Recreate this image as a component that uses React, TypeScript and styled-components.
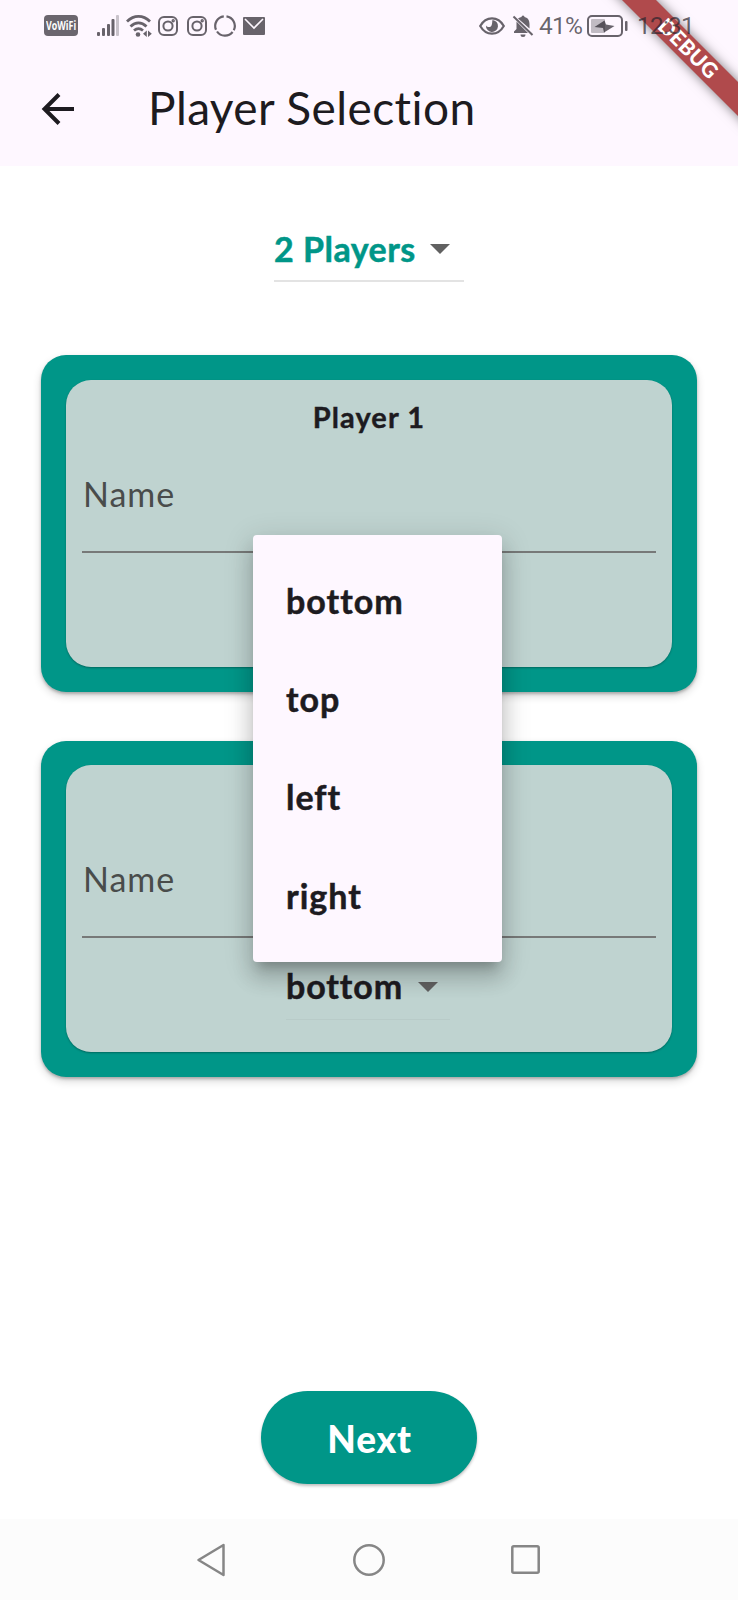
import React from "react";
import styled, { createGlobalStyle } from "styled-components";

const teal = "#009688";
const ink = "#1d1b20";
const surface = "#fef7ff";
const statusInk = "rgba(40, 36, 44, 0.7)";

const GlobalStyle = createGlobalStyle`
  * { box-sizing: border-box; }
  body { margin: 0; background: #fff; }
`;

const Screen = styled.div`
  position: relative;
  display: flex;
  flex-direction: column;
  width: 738px;
  height: 1600px;
  overflow: hidden;
  background: #fff;
  color: ${ink};
  font-family: Lato, "Open Sans", sans-serif;
  font-variant-ligatures: none;
`;

const StatusBar = styled.div`
  position: relative;
  z-index: 3;
  display: flex;
  align-items: center;
  justify-content: space-between;
  height: 51px;
  padding: 0 47px 0 44px;
  color: ${statusInk};
`;

const StatusGroup = styled.div`
  display: flex;
  align-items: center;
  height: 51px;
`;

const StatusText = styled.span<{ $gap: number; $width: number }>`
  width: ${(p) => p.$width}px;
  margin-left: ${(p) => p.$gap}px;
  font: 400 24.5px/53px Roboto, sans-serif;
  letter-spacing: -0.8px;
  white-space: nowrap;
`;

const Glyph = styled.svg<{ $gap?: number }>`
  display: block;
  flex: none;
  margin-left: ${(p) => p.$gap ?? 0}px;
  overflow: visible;
`;

const VoWifi = styled.span`
  display: flex;
  align-items: center;
  justify-content: center;
  width: 34px;
  height: 21px;
  border-radius: 4px;
  background: #6b666e;
  color: #fff;
  font: 700 13px/21px "Open Sans", sans-serif;
`;

const Condensed = styled.span`
  transform: scaleX(0.68);
`;

const Header = styled.header`
  background: ${surface};
  height: 166px;
`;

const Toolbar = styled.div`
  display: flex;
  align-items: center;
  height: 115px;
  padding-left: 41px;
`;

const Title = styled.h1`
  margin: 0 0 1px 73px;
  font-size: 46px;
  font-weight: 400;
  line-height: 60px;
  letter-spacing: 0.4px;
  white-space: nowrap;
`;

const BannerClip = styled.div`
  position: absolute;
  top: 0;
  right: 0;
  z-index: 2;
  width: 160px;
  height: 160px;
  overflow: hidden;
`;

const Ribbon = styled.div`
  position: absolute;
  top: 37px;
  left: 10px;
  width: 200px;
  height: 24px;
  transform: rotate(45deg);
  background: #b04a4c;
  box-shadow: 0 0 12px rgba(0, 0, 0, 0.5);
  color: #fff;
  font: 900 21px/22px Lato, sans-serif;
  letter-spacing: 0.4px;
  text-align: center;
`;

const Body = styled.main`
  flex: 1;
  display: flex;
  flex-direction: column;
  align-items: center;
`;

const CountSelect = styled.div`
  display: flex;
  align-items: center;
  width: 190px;
  height: 68px;
  margin-top: 48px;
  padding-top: 3px;
  border-bottom: 2px solid #e3e3e3;
  color: ${teal};
  font-size: 34px;
  font-weight: 700;
  letter-spacing: 0.5px;
  -webkit-text-stroke: 0.5px;
  white-space: nowrap;
`;

const CountLabel = styled.span`
  width: 156px;
  line-height: 64px;
`;

const Cards = styled.div`
  display: flex;
  flex-direction: column;
  gap: 49px;
  width: 656px;
  margin-top: 73px;
`;

const Card = styled.section`
  height: 336.5px;
  padding: 24.5px 25px 25px;
  border-radius: 25px;
  background: ${teal};
  box-shadow: 0 2px 3px rgba(0, 0, 0, 0.24), 0 4px 8px rgba(0, 0, 0, 0.16);
`;

const CardInner = styled.div`
  display: flex;
  flex-direction: column;
  align-items: center;
  height: 287px;
  padding: 0 16px;
  border-radius: 25px;
  background: #bfd3d0;
  box-shadow: 0 1px 2px rgba(0, 0, 0, 0.3);
`;

const CardTitle = styled.h2`
  height: 72px;
  margin: 0;
  font-size: 29px;
  font-weight: 700;
  line-height: 73px;
  letter-spacing: 1.1px;
  -webkit-text-stroke: 0.4px;
`;

const Field = styled.div`
  align-self: stretch;
  height: 101px;
  padding-left: 1px;
  border-bottom: 2px solid #777978;
  color: #494c4b;
  font-size: 34px;
  line-height: 83px;
  letter-spacing: 1px;
`;

const SideSelect = styled.div`
  display: flex;
  width: 164px;
  height: 82px;
  margin-right: 2px;
  padding-top: 24px;
  border-bottom: 1px solid #b8cbc8;
  font-size: 34px;
  font-weight: 700;
  line-height: 47px;
  letter-spacing: 0.9px;
  -webkit-text-stroke: 0.5px;
`;

const SideLabel = styled.span`
  width: 132px;
`;

const Menu = styled.ul`
  position: absolute;
  top: 535px;
  left: 253px;
  z-index: 1;
  width: 249px;
  height: 427px;
  margin: 0;
  padding: 16.5px 0 0 33px;
  border-radius: 4px;
  background: ${surface};
  box-shadow: 0 10px 10px -6px rgba(0, 0, 0, 0.2), 0 16px 20px 2px rgba(0, 0, 0, 0.14),
    0 6px 28px 4px rgba(0, 0, 0, 0.12);
  list-style: none;
`;

const MenuItem = styled.li`
  height: 98.4px;
  font-size: 34px;
  font-weight: 700;
  line-height: 98.4px;
  letter-spacing: 1px;
  -webkit-text-stroke: 0.5px;
`;

const NextButton = styled.button`
  width: 216px;
  height: 93px;
  margin: auto 0 35px;
  padding: 0 0 0 1px;
  border: 0;
  border-radius: 47px;
  background: ${teal};
  box-shadow: 0 2px 3px rgba(0, 0, 0, 0.25);
  color: #fff;
  font: 900 37px/95px Lato, sans-serif;
  letter-spacing: 0.8px;
`;

const NavBar = styled.nav`
  display: flex;
  height: 81px;
  align-items: center;
  padding-left: 196px;
  background: #fcfcfc;
  color: #868686;
`;

const Caret = () => (
  <Glyph width="20" height="10" viewBox="0 0 20 10">
    <path d="M0 0h20L10 10z" fill="#616161" />
  </Glyph>
);

const CaretSlot = styled.span`
  padding-top: 20px;
`;

const Instagram = ({ gap }: { gap: number }) => (
  <Glyph $gap={gap} width="20" height="20" viewBox="0 0 20 20" fill="none" stroke="currentColor" strokeWidth="2">
    <rect x="1" y="1" width="18" height="18" rx="5" />
    <circle cx="10" cy="10" r="4.6" />
    <circle cx="15.2" cy="4.8" r="0.7" />
  </Glyph>
);

const PlayerCard = ({ title, side }: { title?: string; side?: string }) => (
  <Card>
    <CardInner>
      <CardTitle>{title}</CardTitle>
      <Field>Name</Field>
      {side && (
        <SideSelect>
          <SideLabel>{side}</SideLabel>
          <CaretSlot>
            <Caret />
          </CaretSlot>
        </SideSelect>
      )}
    </CardInner>
  </Card>
);

export default function App() {
  return (
    <Screen>
      <GlobalStyle />
      <Header>
        <StatusBar>
          <StatusGroup>
            <VoWifi>
              <Condensed>VoWiFi</Condensed>
            </VoWifi>
            <Glyph $gap={19} width="22" height="22" viewBox="0 0 22 22" fill="currentColor">
              <rect x="0" y="17" width="3" height="4" rx="1" />
              <rect x="5" y="13" width="3" height="8" rx="1" />
              <rect x="10" y="9" width="3" height="12" rx="1" />
              <rect x="14.5" y="4" width="3" height="17" rx="1" />
              <rect x="19" y="0" width="3" height="21" rx="1" opacity="0.35" />
            </Glyph>
            <Glyph $gap={7} width="26" height="22" viewBox="0 0 26 22" fill="none" stroke="currentColor" strokeWidth="2.8">
              <path d="M1 6.5C8-.3 17-.3 24 6.5M4.500 11.500c5-4.800 11-4.800 16 0M8 15.500c3-2.500 6-2.500 9 0" />
              <circle cx="12" cy="19.500" r="2.300" fill="currentColor" stroke="none" />
              <path d="M20.800 15.500v6.500l-3.800-3.200zM22 15.500v6.500l3.800-3.200z" fill="currentColor" stroke="none" />
            </Glyph>
            <Instagram gap={6} />
            <Instagram gap={9} />
            <Glyph $gap={7} width="22" height="22" viewBox="0 0 22 22" fill="none" stroke="currentColor" strokeWidth="2.2">
              <path d="M12.500 1.300A9.700 9.700 0 0 1 19.800 15.200M18.600 17A9.700 9.700 0 0 1 3 16.500M2 14.800A9.700 9.700 0 0 1 9.800 1.300" />
            </Glyph>
            <Glyph $gap={7} width="22" height="18" viewBox="0 0 22 18">
              <rect width="22" height="18" rx="1" fill="currentColor" />
              <path d="M2 2l9 9 9-9" fill="none" stroke="#fef7ff" strokeWidth="1.600" />
            </Glyph>
          </StatusGroup>
          <StatusGroup>
            <Glyph width="26" height="18" viewBox="0 0 26 18">
              <path d="M1.200 9C7-1.200 19-1.200 24.800 9 19 19.200 7 19.200 1.200 9z" fill="none" stroke="currentColor" strokeWidth="2.200" />
              <path d="M13.500 3A6 6 0 1 1 7 8.500c1.500 2 4.500 2 5.500 0s.500-4 1-5.500z" fill="currentColor" />
            </Glyph>
            <Glyph $gap={8} width="20" height="22" viewBox="0 0 20 22">
              <path d="M5 3.500Q7 2 8.500 2a1.500 1.500 0 0 1 3 0c4 1 5 4 5 7v4.500zM3.500 6.500 15 18H1v-1.500l2.500-2.500zM7.500 19.500h5a2.500 2.500 0 0 1-5 0z" fill="currentColor" />
              <path d="M.500 1.500l19 18.500" stroke="currentColor" strokeWidth="2" />
            </Glyph>
            <StatusText $gap={6} $width={43}>41%</StatusText>
            <Glyph $gap={5} width="41" height="22" viewBox="0 0 41 22">
              <rect x="1" y="1" width="34" height="20" rx="4" fill="none" stroke="currentColor" strokeWidth="2" />
              <rect x="4" y="4" width="14" height="14" rx="1" fill="currentColor" opacity="0.4" />
              <path d="M7.500 12 17.500 5.500l1.500 4 8.500 1.500-10.500 6.500-1-4.500z" fill="currentColor" />
              <rect x="38" y="6" width="2.500" height="10" rx="1" fill="currentColor" />
            </Glyph>
            <StatusText $gap={9} $width={54}>12:31</StatusText>
          </StatusGroup>
        </StatusBar>
        <Toolbar>
          <Glyph width="34" height="32" viewBox="0 0 34 32" fill="none" stroke={ink} strokeWidth="4">
            <path d="M33 16H3M18 1.500 3.500 16 18 30.500" />
          </Glyph>
          <Title>Player Selection</Title>
        </Toolbar>
      </Header>
      <BannerClip>
        <Ribbon>DEBUG</Ribbon>
      </BannerClip>
      <Body>
        <CountSelect>
          <CountLabel>2 Players</CountLabel>
          <Caret />
        </CountSelect>
        <Cards>
          <PlayerCard title="Player 1" />
          <PlayerCard side="bottom" />
        </Cards>
        <NextButton>Next</NextButton>
      </Body>
      <Menu>
        {["bottom", "top", "left", "right"].map((side) => (
          <MenuItem key={side}>{side}</MenuItem>
        ))}
      </Menu>
      <NavBar>
        <Glyph width="30" height="34" viewBox="0 0 30 34" fill="none" stroke="currentColor" strokeWidth="2.500" strokeLinejoin="round">
          <path d="M2.500 17 27.500 2v30z" />
        </Glyph>
        <Glyph $gap={127} width="32" height="32" viewBox="0 0 32 32" fill="none" stroke="currentColor" strokeWidth="2.500">
          <circle cx="16" cy="16" r="14.700" />
        </Glyph>
        <Glyph $gap={126} width="29" height="29" viewBox="0 0 29 29" fill="none" stroke="currentColor" strokeWidth="2.500">
          <rect x="1.300" y="1.300" width="26.400" height="26.400" rx="1.500" />
        </Glyph>
      </NavBar>
    </Screen>
  );
}
